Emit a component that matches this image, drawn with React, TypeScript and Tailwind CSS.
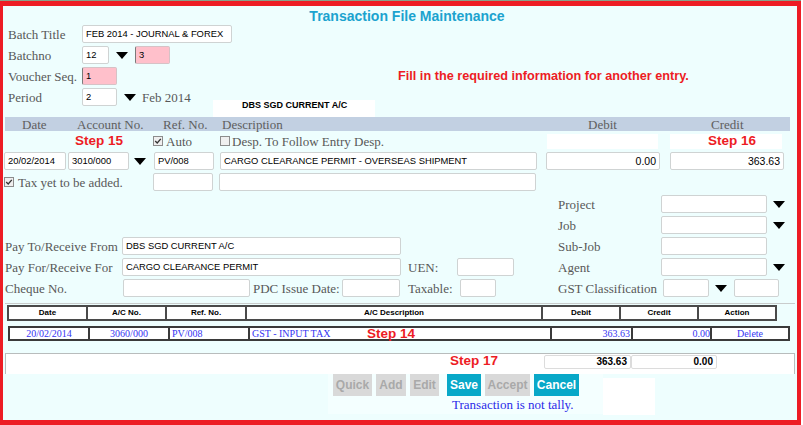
import React from 'react';

const serif = "font-['Liberation_Serif','Times_New_Roman',serif]";
const sans = "font-['Liberation_Sans',Arial,sans-serif]";

function Label({ className = '', children }: { className?: string; children: React.ReactNode }) {
  return (
    <span className={`h-[18px] shrink-0 flex items-center whitespace-nowrap text-[13px] leading-none text-[#585858] ${serif} ${className}`}>
      {children}
    </span>
  );
}

function Field({
  w,
  value = '',
  pink,
  right,
  className = '',
}: {
  w: string;
  value?: string;
  pink?: boolean;
  right?: boolean;
  className?: string;
}) {
  return (
    <div
      className={`${w} h-[18px] shrink-0 flex items-center overflow-hidden whitespace-nowrap rounded-[2px] border px-[3px] text-[9.4px] leading-none text-black ${sans} ${
        pink ? 'bg-[#ffc0cb] border-[#d6c2c6] border-l-[#7a7a7a]' : 'bg-white border-[#cfd3d3]'
      } ${right ? 'justify-end' : ''} ${className}`}
    >
      {value}
    </div>
  );
}

function Caret({ className = '' }: { className?: string }) {
  return (
    <svg width="12" height="7" viewBox="0 0 12 7" className={`shrink-0 ${className}`}>
      <polygon points="0,0 12,0 6,7" fill="#000" />
    </svg>
  );
}

function Check({ checked }: { checked?: boolean }) {
  return (
    <svg width="10" height="10" viewBox="0 0 10 10" className="shrink-0">
      <rect x="0.5" y="0.5" width="9" height="9" fill="#efefef" stroke="#8c8c8c" />
      {checked && <path d="M2.2 5 L4.2 7 L7.8 2.8" fill="none" stroke="#333" strokeWidth="1.3" />}
    </svg>
  );
}

function Step({ children, className = '' }: { children: React.ReactNode; className?: string }) {
  return (
    <span className={`shrink-0 whitespace-nowrap text-[13.5px] font-bold leading-none text-[#ed1c24] ${sans} ${className}`}>
      {children}
    </span>
  );
}

function Btn({ label, active, w }: { label: string; active?: boolean; w: string }) {
  return (
    <div
      className={`${w} h-[22px] shrink-0 flex items-center justify-center text-[12px] font-bold ${sans} ${
        active ? 'bg-[#08a8c8] text-white' : 'bg-[#d9d9d9] text-[#a9a9a9]'
      }`}
    >
      {label}
    </div>
  );
}

export default function App() {
  const gridHead = `h-full shrink-0 flex items-center justify-center border-l-2 border-[#4a4a4a] bg-white text-[8px] font-bold text-black ${sans}`;
  const gridCell = `h-full shrink-0 flex items-center border-l-2 border-[#3a3a3a] bg-white text-[10px] leading-none text-[#3434f2] ${serif}`;

  return (
    <div className="w-[803px] h-[425px] bg-white">
      <div className="h-px w-[801px] bg-[#8aa08a]" />
      <div className="w-[801px] h-[424px] overflow-hidden border-[#ed1c24] border-t-[5px] border-l-[3px] border-r-[4px] border-b-[5px] bg-[#eefefe] leading-none">
        {/* title */}
        <div className="h-[19px] flex items-center justify-center pl-[14px]">
          <span className={`text-[14px] font-bold leading-none text-[#1ba3cf] ${sans}`}>Transaction File Maintenance</span>
        </div>

        {/* batch header */}
        <div className="flex items-center h-[18px] pl-[5px]">
          <Label className="w-[74px]">Batch Title</Label>
          <Field w="w-[150px]" value="FEB 2014 - JOURNAL & FOREX" />
        </div>
        <div className="mt-[3px] flex items-center h-[18px] pl-[5px]">
          <Label className="w-[74px]">Batchno</Label>
          <Field w="w-[27px]" value="12" />
          <Caret className="ml-[7px]" />
          <Field w="w-[35px]" value="3" pink className="ml-[7px]" />
        </div>
        <div className="mt-[3px] flex items-center h-[18px] pl-[5px]">
          <Label className="w-[74px]">Voucher Seq.</Label>
          <Field w="w-[35px]" value="1" pink />
          <span className={`ml-[281px] whitespace-nowrap text-[12.7px] font-bold leading-none text-[#ed1c24] ${sans}`}>
            Fill in the required information for another entry.
          </span>
        </div>
        <div className="mt-[3px] flex items-start h-[29px] pl-[5px]">
          <Label className="w-[74px]">Period</Label>
          <Field w="w-[35px]" value="2" />
          <Caret className="ml-[7px] mt-[6px]" />
          <Label className="w-[77px] pl-[6px]">Feb 2014</Label>
          <div className="mt-[12px] w-[162px] h-[17px] bg-white pl-[29px] flex items-start">
            <span className={`mt-[1px] text-[9px] font-bold leading-[9px] text-black ${sans}`}>DBS SGD CURRENT A/C</span>
          </div>
        </div>

        {/* column header bar */}
        <div className={`ml-[2px] w-[785px] h-[14px] flex items-center bg-[#c2d0e2] text-[13px] leading-none text-[#5e5e5e] ${serif}`}>
          <span className="w-[17px]" />
          <span className="w-[55px]">Date</span>
          <span className="w-[86px]">Account No.</span>
          <span className="w-[59px]">Ref. No.</span>
          <span className="w-[366px]">Description</span>
          <span className="w-[123px]">Debit</span>
          <span>Credit</span>
        </div>

        {/* entry row labels */}
        <div className="h-[20px] flex items-center">
          <span className="w-[72px] shrink-0" />
          <div className="w-[78px] shrink-0 flex items-center">
            <Step>Step 15</Step>
          </div>
          <div className="w-[67px] shrink-0 flex items-center gap-[3px]">
            <Check checked />
            <Label>Auto</Label>
          </div>
          <div className="w-[327px] shrink-0 flex items-center gap-[2px]">
            <Check />
            <Label>Desp. To Follow Entry Desp.</Label>
          </div>
          <div className="w-[111px] h-[15px] shrink-0 bg-white" />
          <span className="w-[12px] shrink-0" />
          <div className="w-[112px] h-[15px] shrink-0 bg-white flex items-center pl-[38px]">
            <Step>Step 16</Step>
          </div>
        </div>

        {/* entry inputs */}
        <div className="mt-[1px] flex items-center h-[18px] pl-[1px]">
          <Field w="w-[62px]" value="20/02/2014" />
          <Field w="w-[61px]" value="3010/000" className="ml-[2px]" />
          <Caret className="ml-[5px]" />
          <Field w="w-[60px]" value="PV/008" className="ml-[8px]" />
          <Field w="w-[317px]" value="CARGO CLEARANCE PERMIT - OVERSEAS SHIPMENT" className="ml-[6px]" />
          <Field w="w-[114px]" value="0.00" right className="ml-[9px] text-[10.5px]" />
          <Field w="w-[114px]" value="363.63" right className="ml-[10px] text-[10.5px]" />
        </div>
        <div className="mt-[3px] flex items-center h-[18px] pl-[1px]">
          <div className="w-[149px] shrink-0 flex items-center gap-[4px]">
            <Check checked />
            <Label>Tax yet to be added.</Label>
          </div>
          <Field w="w-[60px]" />
          <Field w="w-[317px]" className="ml-[6px]" />
        </div>

        {/* extra fields */}
        <div className="mt-[4px]">
          <div className="h-[21px] flex items-start">
            <div className="w-[555px] shrink-0" />
            <Label className="w-[103px]">Project</Label>
            <Field w="w-[106px]" />
            <Caret className="ml-[6px] mt-[6px]" />
          </div>
          <div className="h-[21px] flex items-start">
            <div className="w-[555px] shrink-0" />
            <Label className="w-[103px]">Job</Label>
            <Field w="w-[106px]" />
            <Caret className="ml-[6px] mt-[6px]" />
          </div>
          <div className="h-[21px] flex items-start">
            <div className="w-[555px] shrink-0 flex items-start pl-[2px]">
              <Label className="w-[117px]">Pay To/Receive From</Label>
              <Field w="w-[279px]" value="DBS SGD CURRENT A/C" />
            </div>
            <Label className="w-[103px]">Sub-Job</Label>
            <Field w="w-[106px]" />
          </div>
          <div className="h-[21px] flex items-start">
            <div className="w-[555px] shrink-0 flex items-start pl-[2px]">
              <Label className="w-[117px]">Pay For/Receive For</Label>
              <Field w="w-[279px]" value="CARGO CLEARANCE PERMIT" />
              <Label className="w-[49px] ml-[7px]">UEN:</Label>
              <Field w="w-[57px]" />
            </div>
            <Label className="w-[103px]">Agent</Label>
            <Field w="w-[106px]" />
            <Caret className="ml-[6px] mt-[6px]" />
          </div>
          <div className="h-[21px] flex items-start">
            <div className="w-[555px] shrink-0 flex items-start pl-[2px]">
              <Label className="w-[118px]">Cheque No.</Label>
              <Field w="w-[127px]" />
              <Label className="w-[89px] ml-[3px]">PDC Issue Date:</Label>
              <Field w="w-[58px]" />
              <Label className="w-[52px] ml-[8px]">Taxable:</Label>
              <Field w="w-[36px]" />
            </div>
            <Label className="w-[105px]">GST Classification</Label>
            <Field w="w-[46px]" />
            <Caret className="ml-[6px] mt-[6px]" />
            <Field w="w-[45px]" className="ml-[7px]" />
          </div>
        </div>

        <div className="mt-[3px] ml-[2px] w-[790px] h-px bg-[#c9cccc]" />

        {/* entries grid */}
        <div className="mt-[1px] ml-[4px] w-[770px] h-[16px] flex border-y-2 border-r-2 border-[#4a4a4a]">
          <div className={`${gridHead} w-[79px]`}>Date</div>
          <div className={`${gridHead} w-[79px]`}>A/C No.</div>
          <div className={`${gridHead} w-[80px]`}>Ref. No.</div>
          <div className={`${gridHead} w-[296px]`}>A/C Description</div>
          <div className={`${gridHead} w-[78px]`}>Debit</div>
          <div className={`${gridHead} w-[78px]`}>Credit</div>
          <div className={`${gridHead} flex-1`}>Action</div>
        </div>
        <div className="mt-[5px] ml-[5px] w-[782px] h-[15px] flex border-y-2 border-r-2 border-[#3a3a3a]">
          <div className={`${gridCell} w-[80px] justify-center`}>20/02/2014</div>
          <div className={`${gridCell} w-[80px] justify-center`}>3060/000</div>
          <div className={`${gridCell} w-[80px] pl-[2px]`}>PV/008</div>
          <div className={`${gridCell} w-[302px] pl-[2px]`}>
            <span className="w-[115px] shrink-0">GST - INPUT TAX</span>
            <Step>Step 14</Step>
          </div>
          <div className={`${gridCell} w-[81px] justify-end pr-[1px]`}>363.63</div>
          <div className={`${gridCell} w-[79px] justify-end`}>0.00</div>
          <div className={`${gridCell} flex-1 justify-center`}>Delete</div>
        </div>

        {/* totals */}
        <div className="mt-[12px] ml-[2px] w-[790px] h-[21px] flex items-start border-t border-x border-[#b8bcbc] bg-white">
          <div className="w-[444px] shrink-0" />
          <div className="w-[94px] shrink-0 flex items-start">
            <Step>Step 17</Step>
          </div>
          <div className={`mt-[1px] w-[87px] h-[14px] shrink-0 flex items-center justify-end pr-[3px] border border-[#dcdcdc] rounded-[2px] text-[10px] font-bold text-black ${sans}`}>
            363.63
          </div>
          <div className={`mt-[1px] w-[86px] h-[14px] shrink-0 flex items-center justify-end pr-[3px] border border-[#dcdcdc] rounded-[2px] text-[10px] font-bold text-black ${sans}`}>
            0.00
          </div>
        </div>

        {/* buttons */}
        <div className="flex items-start">
          <div className="w-[325px] shrink-0" />
          <div className="w-[275px] h-[40px] shrink-0 bg-[#f4ffff] pl-[5px]">
            <div className="flex items-center">
              <Btn label="Quick" w="w-[39px]" />
              <Btn label="Add" w="w-[30px] ml-[4px]" />
              <Btn label="Edit" w="w-[29px] ml-[4px]" />
              <Btn label="Save" active w="w-[34px] ml-[8px]" />
              <Btn label="Accept" w="w-[45px] ml-[4px]" />
              <Btn label="Cancel" active w="w-[45px] ml-[4px]" />
            </div>
            <div className={`pl-[119px] h-[16px] flex items-center text-[13px] leading-none text-[#2a2ae8] ${serif}`}>
              Transaction is not tally.
            </div>
          </div>
          <div className="mt-[4px] w-[52px] h-[37px] shrink-0 bg-white" />
        </div>
      </div>
    </div>
  );
}
